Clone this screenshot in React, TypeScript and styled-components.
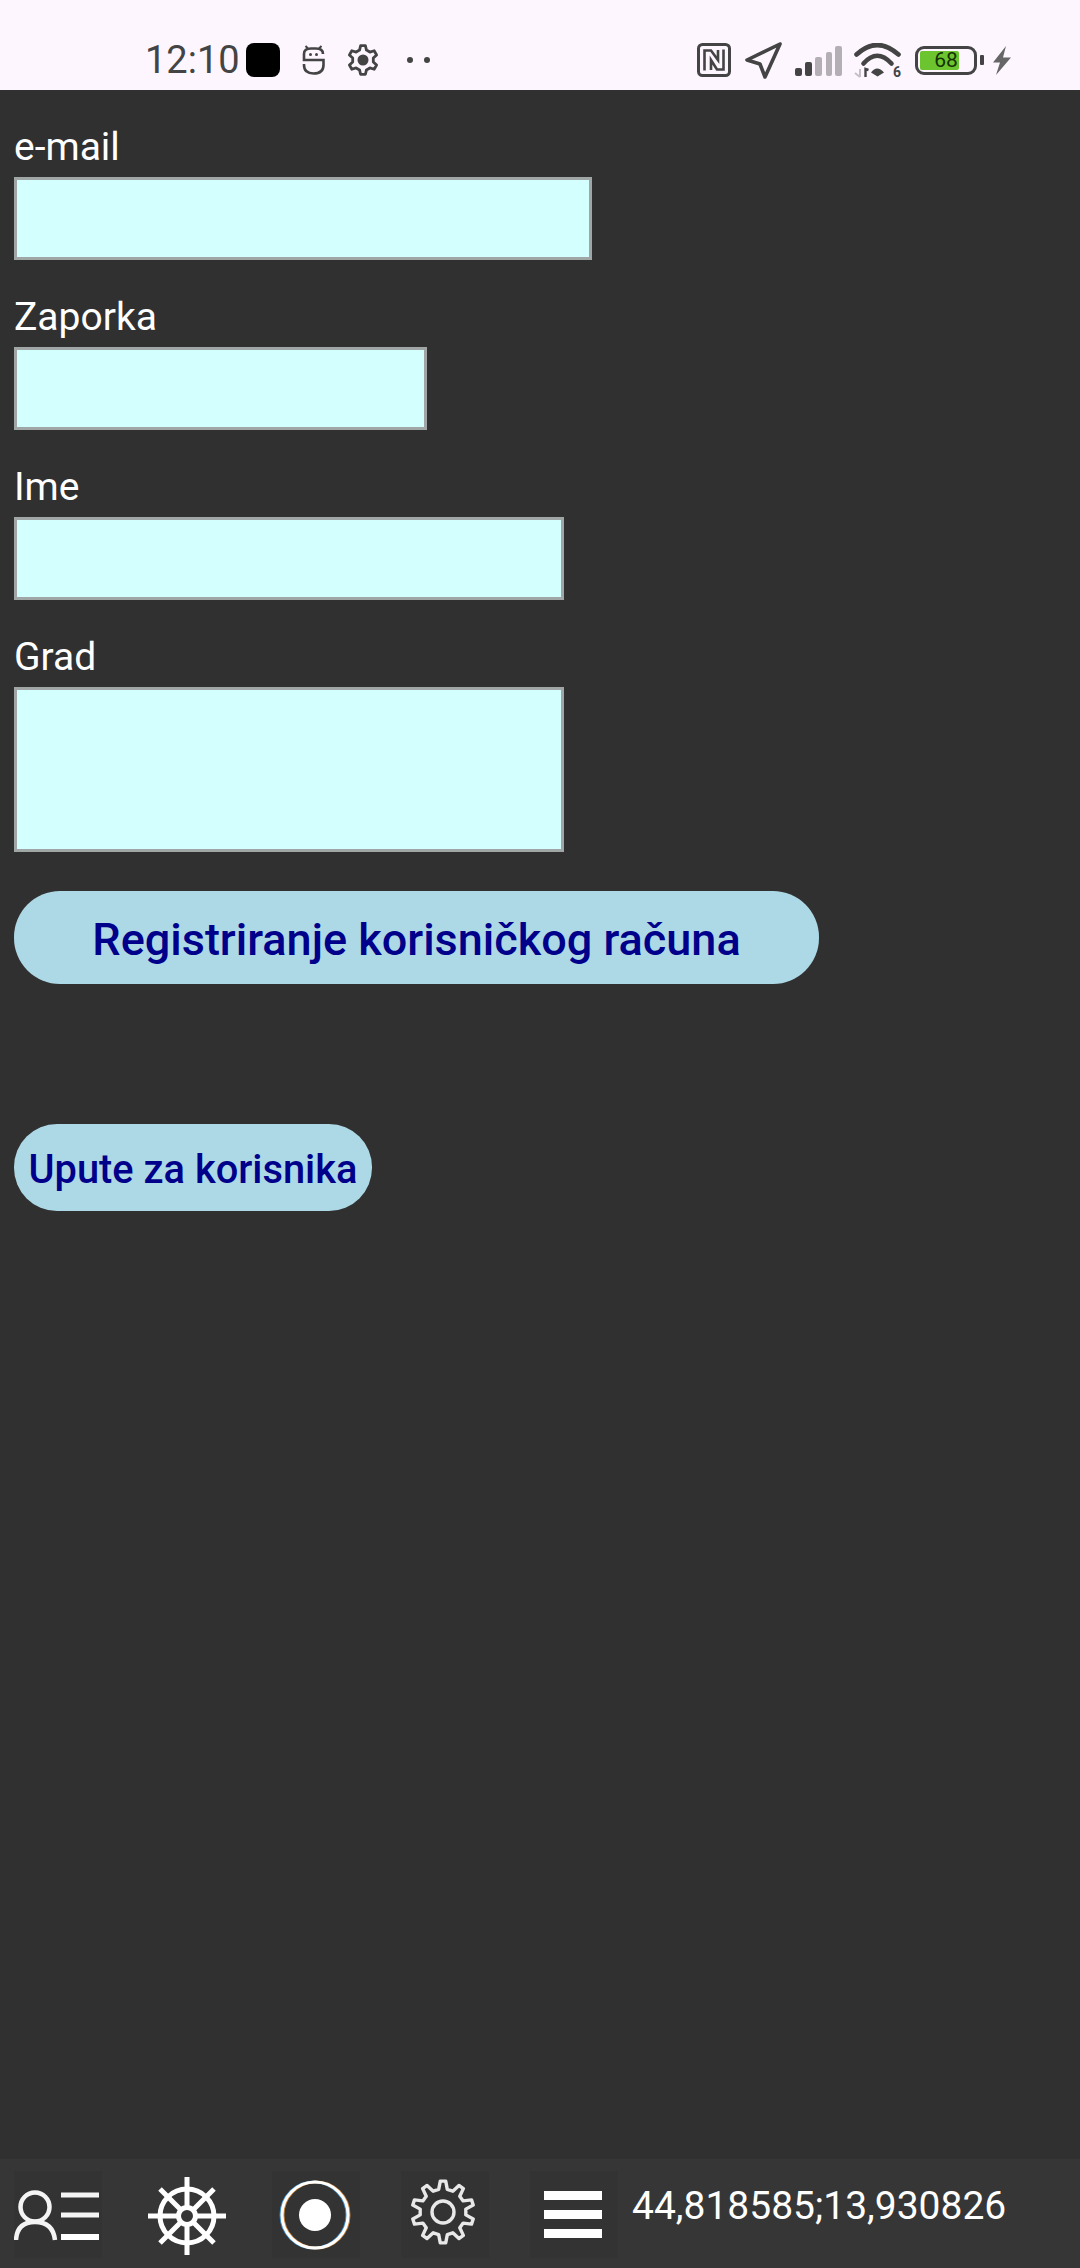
import React from "react";
import styled, { createGlobalStyle } from "styled-components";

const gearPath = (
  teeth: number,
  cx: number,
  cy: number,
  outer: number,
  inner: number,
  tip = 0.17,
  root = 0.32
) => {
  const step = (Math.PI * 2) / teeth;
  const pts: string[] = [];
  for (let i = 0; i < teeth; i++) {
    const a = i * step - Math.PI / 2;
    const at = (r: number, d: number) =>
      `${(cx + r * Math.cos(a + d * step)).toFixed(2)} ${(cy + r * Math.sin(a + d * step)).toFixed(2)}`;
    pts.push(`${i === 0 ? "M" : "L"}${at(inner, -root)}`);
    pts.push(`L${at(outer, -tip)}`);
    pts.push(`L${at(outer, tip)}`);
    pts.push(`L${at(inner, root)}`);
  }
  return pts.join(" ") + "Z";
};

const BATTERY_LEVEL = 68;

const App: React.FC = () => {
  return (
    <Page>
      <GlobalStyle />
      <StatusBar>
        <StatusGroup>
          <Clock>12:10</Clock>
          <BlackSquare />
          <RobotIcon width={23} height={30} viewBox="0 0 23 30" fill="none" stroke="#444" strokeWidth={2.6}>
            <path d="M21 9Q21 3.500 14 3.500H9Q2 3.500 2 9V15H21.500V20Q21.500 28.500 11.500 28.500Q2 28.500 2 20V19" />
            <path d="M3.500 1L6 3.500M19.500 1L17 3.500" strokeWidth={2} />
            <circle cx={8.5} cy={9.5} r={1.5} fill="#444" stroke="none" />
            <circle cx={14.5} cy={9.5} r={1.5} fill="#444" stroke="none" />
          </RobotIcon>
          <StatusGear width={32} height={32} viewBox="0 0 32 32" fill="none" stroke="#444" strokeWidth={2.8} strokeLinejoin="round">
            <path d={gearPath(6, 16, 16, 14.5, 10.5, 0.16, 0.32)} />
            <circle cx={16} cy={16} r={5.5} fill="#444" stroke="none" />
          </StatusGear>
          <MoreDots>
            <Dot />
            <Dot />
          </MoreDots>
        </StatusGroup>
        <StatusGroup>
          <NfcIcon width={34} height={34} viewBox="0 0 34 34" fill="none" stroke="#444" strokeWidth={3}>
            <rect x={1.5} y={1.5} width={31} height={31} rx={4} />
            <path d="M7.500 27.500V7.500H14L21 17V7M26.500 6.500V26.500H20L14 17V27" strokeWidth={2.6} />
          </NfcIcon>
          <NavArrow width={37} height={37} viewBox="0 0 37 37" fill="none" stroke="#444" strokeWidth={3.6} strokeLinejoin="round">
            <path d="M35 2L2 18L15 22L20 35Z" />
          </NavArrow>
          <SignalIcon width={48} height={31} viewBox="0 0 48 31">
            <rect x={1} y={23} width={7} height={8} rx={2} fill="#444" />
            <rect x={11} y={17} width={7} height={14} rx={2} fill="#444" />
            <rect x={21} y={12} width={7} height={19} rx={2} fill="#b3afb4" />
            <rect x={32} y={7} width={6} height={24} rx={2} fill="#b3afb4" />
            <rect x={41} y={1} width={7} height={30} rx={2} fill="#b3afb4" />
          </SignalIcon>
          <WifiWrap>
            <svg width={48} height={35} viewBox="0 0 48 35" fill="none">
              <path d="M2.500 11.500Q23 -7.500 44.500 11.500" stroke="#444" strokeWidth={4.6} strokeLinecap="round" />
              <path d="M9.500 20.500Q23 5 37.500 20.500" stroke="#444" strokeWidth={4.6} strokeLinecap="round" />
              <path d="M17 29.500Q23 21.500 30 29.500L23.500 33.500Z" fill="#444" />
              <path d="M6 26V34M6 34L1 30" stroke="#c4c0c5" strokeWidth={2} />
              <path d="M11.500 34V26L14.500 27" stroke="#444" strokeWidth={2.4} />
            </svg>
            <WifiBadge>6</WifiBadge>
          </WifiWrap>
          <Battery>
            <BatteryFill style={{ width: `${BATTERY_LEVEL * 1.1}%` }} />
            <BatteryLabel>{BATTERY_LEVEL}</BatteryLabel>
          </Battery>
          <BatteryTip />
          <BoltIcon width={19} height={29} viewBox="0 0 19 29">
            <path d="M14 0L1 16.500H8L4 29L19 11.500H11Z" fill="#666" />
          </BoltIcon>
        </StatusGroup>
      </StatusBar>

      <Main>
        <Field>
          <FieldLabel>e-mail</FieldLabel>
          <TextInput $width={578} />
        </Field>
        <Field>
          <FieldLabel>Zaporka</FieldLabel>
          <TextInput type="password" $width={413} />
        </Field>
        <Field>
          <FieldLabel>Ime</FieldLabel>
          <TextInput $width={550} />
        </Field>
        <Field>
          <FieldLabel>Grad</FieldLabel>
          <TextArea />
        </Field>
        <PrimaryButton>Registriranje korisničkog računa</PrimaryButton>
        <HelpButton>Upute za korisnika</HelpButton>
      </Main>

      <BottomBar>
        <IconRow>
          <IconTile>
            <TileIcon width={88} height={87} viewBox="0 0 88 87" fill="none" stroke="#f4f4f4" strokeWidth={4.5}>
              <circle cx={21} cy={36} r={14.5} />
              <path d="M2 69Q3 51 21 51Q39 51 41 69" />
              <path d="M47 24H85M47 44H85" strokeWidth={5} />
              <path d="M47 66H85" strokeWidth={6} stroke="#fff" />
            </TileIcon>
          </IconTile>
          <IconTile $plain>
            <TileIcon width={88} height={87} viewBox="0 0 88 87" fill="none" stroke="#fff" strokeWidth={5}>
              <circle cx={44} cy={45} r={27} />
              <circle cx={44} cy={45} r={8.5} strokeWidth={5} />
              <path d="M44 6V36M44 54V84M5 45H35M53 45H83M17 18L38 39M50 51L71 72M71 18L50 39M38 51L17 72" />
            </TileIcon>
          </IconTile>
          <IconTile>
            <TileIcon width={88} height={87} viewBox="0 0 88 87" fill="none" strokeWidth={3}>
              <circle cx={42} cy={44} r={33} stroke="#3f8fd0" />
              <circle cx={44} cy={44} r={33} stroke="#c9853f" />
              <circle cx={43} cy={44} r={33} stroke="#fff" />
              <circle cx={43} cy={44} r={16} fill="#fff" stroke="none" />
            </TileIcon>
          </IconTile>
          <IconTile>
            <TileIcon width={88} height={87} viewBox="0 0 88 87" fill="none" stroke="#e8e8e8" strokeWidth={3.4} strokeLinejoin="round">
              <path d={gearPath(10, 42, 41, 31, 23, 0.14, 0.3)} />
              <circle cx={42} cy={41} r={11} />
            </TileIcon>
          </IconTile>
          <IconTile>
            <MenuBars>
              <MenuBar />
              <MenuBar />
              <MenuBar />
            </MenuBars>
          </IconTile>
        </IconRow>
        <Coordinates>44,818585;13,930826</Coordinates>
      </BottomBar>
    </Page>
  );
};

const GlobalStyle = createGlobalStyle`
  html, body {
    margin: 0;
    padding: 0;
    background: #303030;
  }
  * {
    box-sizing: border-box;
  }
`;

const Page = styled.div`
  width: 1080px;
  height: 2268px;
  display: flex;
  flex-direction: column;
  overflow: hidden;
  background: #303030;
  font-family: Roboto, "Noto Sans", sans-serif;
`;

const StatusBar = styled.div`
  height: 90px;
  flex: none;
  background: #fdf6ff;
  display: flex;
  justify-content: space-between;
  padding: 0 69px 0 145px;
  color: #444;
`;

const StatusGroup = styled.div`
  display: flex;
  align-items: center;
  height: 100%;
  padding-top: 30px;
`;

const Clock = styled.span`
  font-size: 38px;
  line-height: 34px;
  width: 101px;
`;

const BlackSquare = styled.div`
  width: 34px;
  height: 34px;
  border-radius: 8px;
  background: #000;
`;

const RobotIcon = styled.svg`
  margin-left: 22px;
`;

const StatusGear = styled.svg`
  margin-left: 22px;
`;

const MoreDots = styled.div`
  display: flex;
  gap: 11px;
  margin-left: 28px;
`;

const Dot = styled.span`
  width: 6px;
  height: 6px;
  border-radius: 50%;
  background: #444;
`;

const NfcIcon = styled.svg``;

const NavArrow = styled.svg`
  margin-left: 14px;
`;

const SignalIcon = styled.svg`
  margin-left: 12px;
`;

const WifiWrap = styled.div`
  position: relative;
  width: 48px;
  height: 35px;
  margin-left: 12px;

  svg {
    display: block;
  }
`;

const WifiBadge = styled.span`
  position: absolute;
  right: 1px;
  bottom: -1px;
  font-size: 14px;
  line-height: 14px;
  font-weight: 700;
  color: #444;
`;

const Battery = styled.div`
  position: relative;
  width: 62px;
  height: 29px;
  margin-left: 13px;
  border: 3px solid #444;
  border-radius: 9px;
  padding: 2px;
  overflow: hidden;
`;

const BatteryFill = styled.div`
  height: 100%;
  background: #6cc52f;
  border-radius: 2px;
`;

const BatteryLabel = styled.span`
  position: absolute;
  inset: 0;
  display: flex;
  align-items: center;
  justify-content: center;
  font-size: 21px;
  color: #143000;
`;

const BatteryTip = styled.div`
  width: 4px;
  height: 10px;
  margin-left: 3px;
  background: #444;
  border-radius: 1px;
`;

const BoltIcon = styled.svg`
  margin-left: 8px;
`;

const Main = styled.div`
  flex: 1;
  min-height: 0;
  display: flex;
  flex-direction: column;
  align-items: flex-start;
  padding: 41px 0 0 14px;
`;

const Field = styled.div`
  display: flex;
  flex-direction: column;
  align-items: flex-start;
  margin-bottom: 41px;

  &:nth-child(4) {
    margin-bottom: 39px;
  }
`;

const FieldLabel = styled.label`
  font-size: 39px;
  line-height: 32px;
  height: 46px;
  color: #fff;
`;

const TextInput = styled.input<{ $width: number }>`
  display: block;
  width: ${(p) => p.$width}px;
  height: 83px;
  margin: 0;
  background: #d4ffff;
  border: 3px solid #a0a5a5;
  border-radius: 0;
  outline: none;
`;

const TextArea = styled.textarea`
  display: block;
  width: 550px;
  height: 165px;
  margin: 0;
  background: #d4ffff;
  border: 3px solid #a0a5a5;
  border-radius: 0;
  outline: none;
  resize: none;
`;

const PrimaryButton = styled.button`
  width: 805px;
  height: 93px;
  border: none;
  border-radius: 46px;
  padding: 3px 0 0;
  background: #add8e6;
  color: #00008b;
  font-family: inherit;
  font-size: 45px;
  font-weight: 500;
  white-space: nowrap;
`;

const HelpButton = styled.button`
  width: 358px;
  height: 87px;
  margin-top: 140px;
  border: none;
  border-radius: 43px;
  padding: 3px 0 0;
  background: #add8e6;
  color: #00008b;
  font-family: inherit;
  font-size: 39.8px;
  font-weight: 500;
  white-space: nowrap;
`;

const BottomBar = styled.div`
  height: 109px;
  flex: none;
  background: #363636;
  display: flex;
  align-items: flex-start;
  padding: 12px 0 0 14px;
`;

const IconRow = styled.div`
  display: flex;
  gap: 41px;
`;

const IconTile = styled.div<{ $plain?: boolean }>`
  width: 88px;
  height: 87px;
  background: ${(p) => (p.$plain ? "transparent" : "#333333")};
  display: flex;
  align-items: center;
  justify-content: center;
`;

const TileIcon = styled.svg`
  filter: blur(0.6px);
`;

const MenuBars = styled.div`
  display: flex;
  flex-direction: column;
  gap: 10px;
  width: 58px;
  margin-right: 2px;
  filter: blur(0.4px);
`;

const MenuBar = styled.div`
  height: 9px;
  background: #fff;
`;

const Coordinates = styled.div`
  margin-left: 14px;
  font-size: 39px;
  line-height: 46px;
  color: #fff;
  padding-top: 12px;
  white-space: nowrap;
`;

export default App;
